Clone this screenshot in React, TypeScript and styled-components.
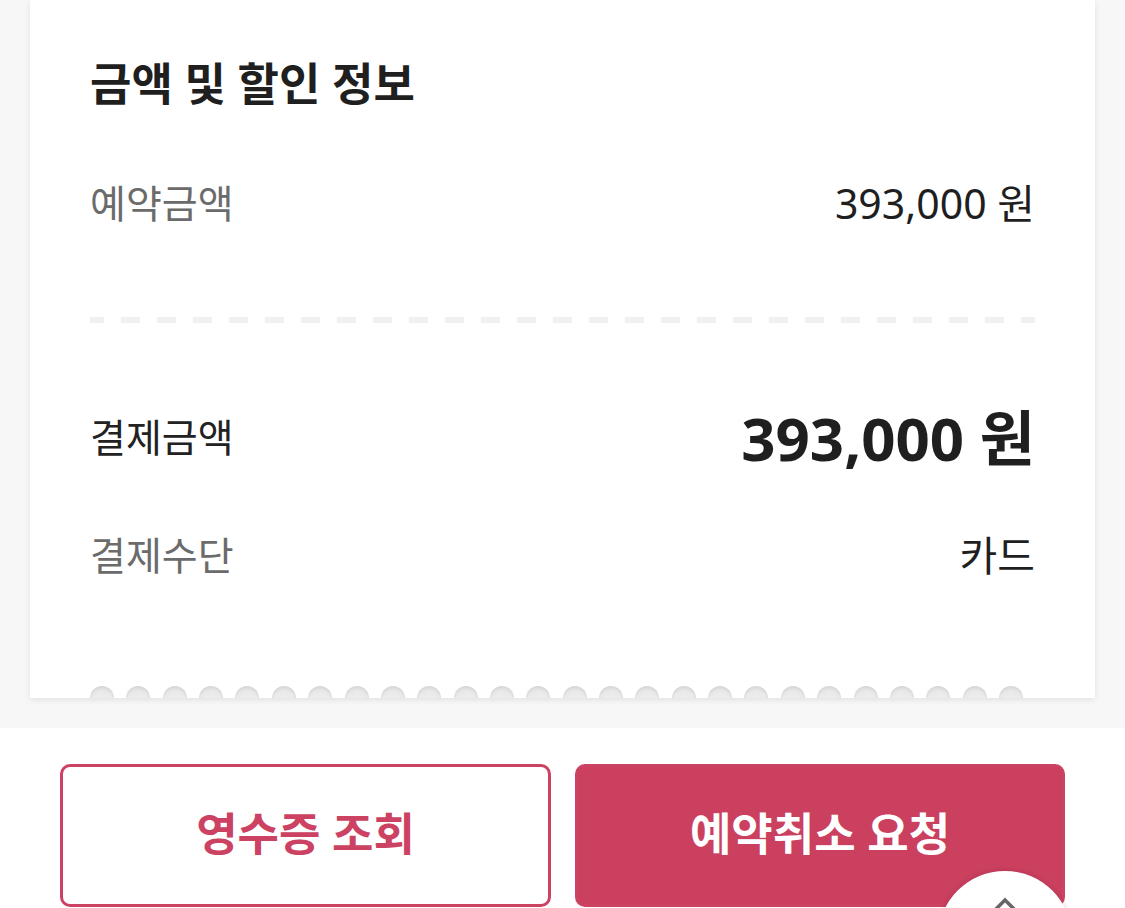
import React from "react";
import styled, { createGlobalStyle } from "styled-components";

const GlobalStyle = createGlobalStyle`
  html, body {
    margin: 0;
    padding: 0;
    background: #ffffff;
    font-family: "Noto Sans", "Noto Sans CJK KR", sans-serif;
    overflow: hidden;
  }
  * { box-sizing: border-box; }
`;

const Page = styled.div`
  position: relative;
  width: 1125px;
  height: 908px;
  overflow: hidden;
  display: flex;
  flex-direction: column;
`;

const GrayArea = styled.div`
  background: #f7f7f7;
  padding: 0 30px 30px;
`;

const Card = styled.div`
  position: relative;
  height: 698px;
  background: #ffffff;
  padding: 0 60px;
  display: flex;
  flex-direction: column;
  box-shadow: 0 2px 6px rgba(0, 0, 0, 0.09);
`;

const Title = styled.h2`
  margin: 0;
  height: 162px;
  display: flex;
  align-items: center;
  font-size: 45px;
  font-weight: 700;
  color: #1f1f1f;
`;

const Row = styled.div<{ $h: number }>`
  height: ${(p) => p.$h}px;
  display: flex;
  align-items: center;
  justify-content: space-between;
`;

const Label = styled.span<{ $dark?: boolean }>`
  font-size: 39px;
  color: ${(p) => (p.$dark ? "#222222" : "#6b6b6b")};
`;

const Value = styled.span<{ $big?: boolean }>`
  font-size: ${(p) => (p.$big ? "60px" : "41px")};
  font-weight: ${(p) => (p.$big ? 700 : 400)};
  color: #1f1f1f;
`;

const DividerWrap = styled.div`
  height: 160px;
  display: flex;
  align-items: center;
`;

const Dashed = styled.div`
  width: 100%;
  height: 6px;
  background: repeating-linear-gradient(
    to right,
    #f0f0f0 0 14px,
    transparent 14px 31px,
    #f0f0f0 31px 36px
  );
`;

const Scallops = styled.div`
  position: absolute;
  left: 60px;
  right: 72px;
  bottom: 0;
  height: 12px;
  overflow: hidden;
  display: flex;
  justify-content: space-between;
`;

const Hole = styled.span`
  width: 24px;
  height: 24px;
  border-radius: 50%;
  background: radial-gradient(circle at 50% 100%, #f0f0f0 0 35%, #e1e1e1 100%);
  box-shadow: inset 0 2px 3px rgba(0, 0, 0, 0.07);
  flex: none;
`;

const BottomBar = styled.div`
  flex: 1;
  background: #ffffff;
  padding: 36px 60px 0;
  display: grid;
  grid-template-columns: 491px 490px;
  gap: 24px;
  align-items: start;
`;

const Button = styled.button<{ $filled?: boolean }>`
  height: 143px;
  border-radius: 10px;
  border: 3px solid #cc4262;
  background: ${(p) => (p.$filled ? "#cb3f5f" : "#ffffff")};
  color: ${(p) => (p.$filled ? "#ffffff" : "#cc4262")};
  font-family: "Noto Sans", "Noto Sans CJK KR", sans-serif;
  font-size: 45px;
  font-weight: 700;
  padding: 0 0 8px;
  cursor: pointer;
`;

const TopButton = styled.button`
  position: absolute;
  left: 938px;
  top: 871px;
  width: 134px;
  height: 134px;
  border-radius: 50%;
  border: none;
  background: #ffffff;
  box-shadow: 0 1px 6px rgba(0, 0, 0, 0.18);
  display: flex;
  justify-content: center;
  padding-top: 26px;
`;

const holes = Array.from({ length: 26 });

export default function App() {
  return (
    <>
      <GlobalStyle />
      <Page>
        <GrayArea>
          <Card>
            <Title>금액 및 할인 정보</Title>
            <Row $h={78}>
              <Label>예약금액</Label>
              <Value>393,000 원</Value>
            </Row>
            <DividerWrap>
              <Dashed />
            </DividerWrap>
            <Row $h={70}>
              <Label $dark>결제금액</Label>
              <Value $big>393,000 원</Value>
            </Row>
            <Row $h={166}>
              <Label>결제수단</Label>
              <Value>카드</Value>
            </Row>
            <Scallops>
              {holes.map((_, i) => (
                <Hole key={i} />
              ))}
            </Scallops>
          </Card>
        </GrayArea>
        <BottomBar>
          <Button>영수증 조회</Button>
          <Button $filled>예약취소 요청</Button>
        </BottomBar>
        <TopButton aria-label="맨 위로">
          <svg width="28" height="16" viewBox="0 0 28 16" fill="none">
            <path d="M3 14 L14 3 L25 14" stroke="#666" strokeWidth="3.5" />
          </svg>
        </TopButton>
      </Page>
    </>
  );
}
